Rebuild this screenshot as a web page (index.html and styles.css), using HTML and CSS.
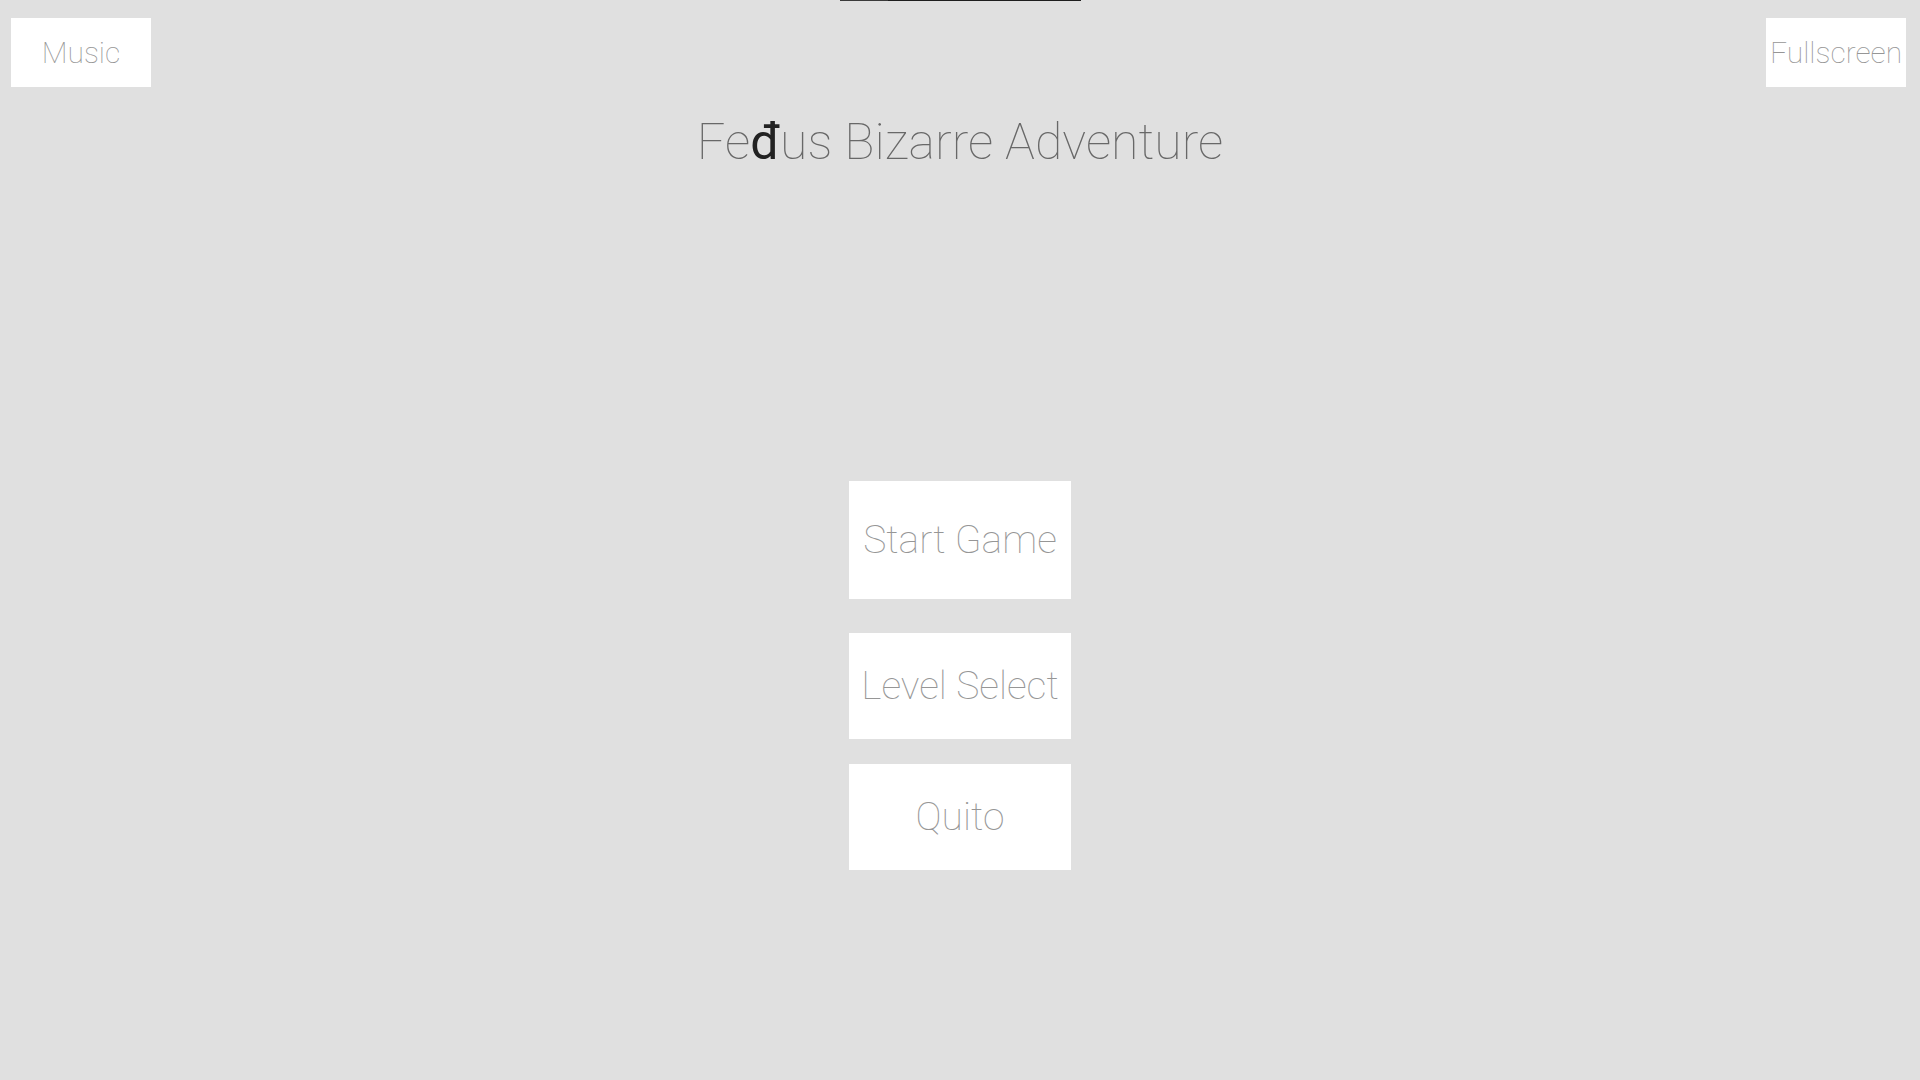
FILE: index.html
```html
<!DOCTYPE html>
<html>
<head>
<meta charset="utf-8">
<link rel="stylesheet" href="styles.css">
</head>
<body>
<div class="topbar"><div class="topbar-fill"></div></div>
<header class="header">
  <button class="corner-btn">Music</button>
  <button class="corner-btn">Fullscreen</button>
</header>
<h1 class="title">Fe<span class="odd">đ</span>us Bizarre Adventure</h1>
<nav class="menu">
  <button class="menu-btn start">Start Game</button>
  <button class="menu-btn level">Level Select</button>
  <button class="menu-btn quit">Quito</button>
</nav>
</body>
</html>
```

FILE: styles.css
```css
html, body {
  margin: 0;
  padding: 0;
}
body {
  background: #e0e0e0;
  width: 1920px;
  height: 1080px;
  overflow: hidden;
  position: relative;
  font-family: Roboto, "Liberation Sans", sans-serif;
  font-weight: 100;
}
.topbar {
  position: absolute;
  top: 0;
  left: 840px;
  width: 241px;
  height: 1px;
  background: #1e1e1e;
}
.topbar-fill {
  width: 48px;
  height: 1px;
  background: #3a3a3a;
}
.header {
  display: flex;
  justify-content: space-between;
  padding: 18px 14px 0 11px;
}
button {
  font-family: inherit;
  font-weight: 100;
  border: none;
  background: #fff;
  color: #969696;
  padding: 0;
  margin: 0;
  cursor: pointer;
}
.corner-btn {
  width: 140px;
  height: 69px;
  font-size: 30px;
}
.title {
  margin: 30px 0 0 0;
  text-align: center;
  font-size: 50px;
  line-height: 50px;
  font-weight: 100;
  color: #686868;
}
.odd {
  font-weight: 400;
  color: #222;
}
.menu {
  display: flex;
  flex-direction: column;
  align-items: center;
  margin-top: 314px;
}
.menu-btn {
  width: 222px;
  font-size: 39px;
  display: flex;
  align-items: center;
  justify-content: center;
}
.start {
  height: 118px;
}
.level {
  height: 106px;
  margin-top: 34px;
}
.quit {
  height: 106px;
  margin-top: 25px;
}
```
